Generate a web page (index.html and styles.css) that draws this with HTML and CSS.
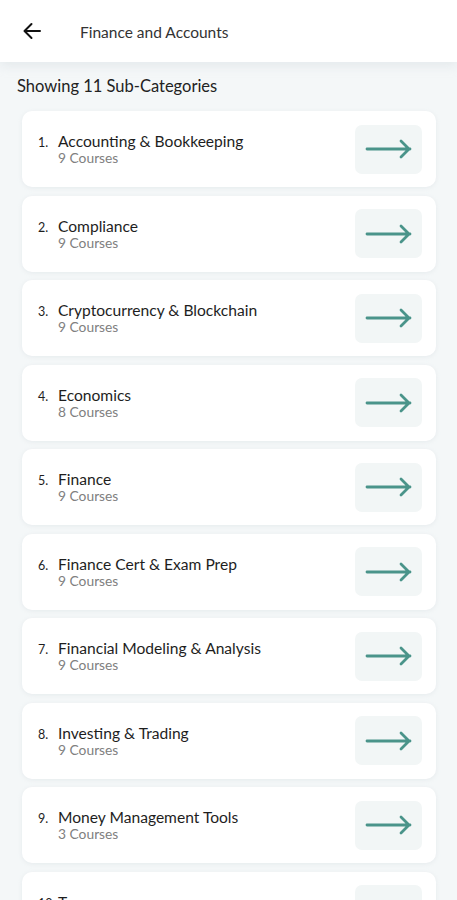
FILE: index.html
```html
<!DOCTYPE html>
<html lang="en">
<head>
    <meta charset="UTF-8">
    <meta name="viewport" content="width=device-width, initial-scale=1.0">
    <title>Finance and Accounts</title>
    <link rel="stylesheet" href="styles.css">
</head>
<body>
    <div class="header">
        <svg class="back" width="20" height="18" viewBox="0 0 20 18">
            <path d="M18 9H3M9.5 2L2.5 9l7 7" fill="none" stroke="#111" stroke-width="2" stroke-linecap="round" stroke-linejoin="round"/>
        </svg>
        <span class="headerTitle">Finance and Accounts</span>
    </div>

    <div class="content">
        <p class="count">Showing 11 Sub-Categories</p>

        <div class="list">
            <div class="item">
                <span class="num">1.</span>
                <div class="text"><p class="name">Accounting &amp; Bookkeeping</p><p class="sub">9 Courses</p></div>
                <div class="go"><svg width="48" height="22" viewBox="0 0 48 22"><path d="M2 11h43M36 3l8 8-8 8" fill="none" stroke="#4a948a" stroke-width="2.8" stroke-linecap="round" stroke-linejoin="round"/></svg></div>
            </div>
            <div class="item">
                <span class="num">2.</span>
                <div class="text"><p class="name">Compliance</p><p class="sub">9 Courses</p></div>
                <div class="go"><svg width="48" height="22" viewBox="0 0 48 22"><path d="M2 11h43M36 3l8 8-8 8" fill="none" stroke="#4a948a" stroke-width="2.8" stroke-linecap="round" stroke-linejoin="round"/></svg></div>
            </div>
            <div class="item">
                <span class="num">3.</span>
                <div class="text"><p class="name">Cryptocurrency &amp; Blockchain</p><p class="sub">9 Courses</p></div>
                <div class="go"><svg width="48" height="22" viewBox="0 0 48 22"><path d="M2 11h43M36 3l8 8-8 8" fill="none" stroke="#4a948a" stroke-width="2.8" stroke-linecap="round" stroke-linejoin="round"/></svg></div>
            </div>
            <div class="item">
                <span class="num">4.</span>
                <div class="text"><p class="name">Economics</p><p class="sub">8 Courses</p></div>
                <div class="go"><svg width="48" height="22" viewBox="0 0 48 22"><path d="M2 11h43M36 3l8 8-8 8" fill="none" stroke="#4a948a" stroke-width="2.8" stroke-linecap="round" stroke-linejoin="round"/></svg></div>
            </div>
            <div class="item">
                <span class="num">5.</span>
                <div class="text"><p class="name">Finance</p><p class="sub">9 Courses</p></div>
                <div class="go"><svg width="48" height="22" viewBox="0 0 48 22"><path d="M2 11h43M36 3l8 8-8 8" fill="none" stroke="#4a948a" stroke-width="2.8" stroke-linecap="round" stroke-linejoin="round"/></svg></div>
            </div>
            <div class="item">
                <span class="num">6.</span>
                <div class="text"><p class="name">Finance Cert &amp; Exam Prep</p><p class="sub">9 Courses</p></div>
                <div class="go"><svg width="48" height="22" viewBox="0 0 48 22"><path d="M2 11h43M36 3l8 8-8 8" fill="none" stroke="#4a948a" stroke-width="2.8" stroke-linecap="round" stroke-linejoin="round"/></svg></div>
            </div>
            <div class="item">
                <span class="num">7.</span>
                <div class="text"><p class="name">Financial Modeling &amp; Analysis</p><p class="sub">9 Courses</p></div>
                <div class="go"><svg width="48" height="22" viewBox="0 0 48 22"><path d="M2 11h43M36 3l8 8-8 8" fill="none" stroke="#4a948a" stroke-width="2.8" stroke-linecap="round" stroke-linejoin="round"/></svg></div>
            </div>
            <div class="item">
                <span class="num">8.</span>
                <div class="text"><p class="name">Investing &amp; Trading</p><p class="sub">9 Courses</p></div>
                <div class="go"><svg width="48" height="22" viewBox="0 0 48 22"><path d="M2 11h43M36 3l8 8-8 8" fill="none" stroke="#4a948a" stroke-width="2.8" stroke-linecap="round" stroke-linejoin="round"/></svg></div>
            </div>
            <div class="item">
                <span class="num">9.</span>
                <div class="text"><p class="name">Money Management Tools</p><p class="sub">3 Courses</p></div>
                <div class="go"><svg width="48" height="22" viewBox="0 0 48 22"><path d="M2 11h43M36 3l8 8-8 8" fill="none" stroke="#4a948a" stroke-width="2.8" stroke-linecap="round" stroke-linejoin="round"/></svg></div>
            </div>
            <div class="item">
                <span class="num">10.</span>
                <div class="text"><p class="name">Taxes</p><p class="sub">9 Courses</p></div>
                <div class="go"><svg width="48" height="22" viewBox="0 0 48 22"><path d="M2 11h43M36 3l8 8-8 8" fill="none" stroke="#4a948a" stroke-width="2.8" stroke-linecap="round" stroke-linejoin="round"/></svg></div>
            </div>
        </div>
    </div>
</body>
</html>
```

FILE: styles.css
```css
body {
    margin: 0;
    background-color: #f4f7f8;
    font-family: "Lato", "Open Sans", sans-serif;
    color: #1e1e1e;
}

p {
    margin: 0;
}

.header {
    height: 62px;
    background-color: #fff;
    display: flex;
    align-items: center;
    padding-left: 22px;
    box-shadow: 0 4px 10px rgba(200, 210, 214, 0.35);
}

.header .back {
    margin-top: -1px;
}

.headerTitle {
    margin-left: 38px;
    font-size: 15.5px;
    color: #333;
    margin-top: 1px;
}

.content {
    padding: 14px 21px 0 17px;
}

.count {
    font-size: 16.5px;
    color: #222;
    margin-bottom: 15px;
}

.list {
    display: flex;
    flex-direction: column;
    gap: 8.5px;
    padding-left: 5px;
}

.item {
    height: 76px;
    background-color: #fff;
    border-radius: 10px;
    display: flex;
    align-items: center;
    padding: 0 14px 0 16px;
    box-sizing: border-box;
    box-shadow: 0 1px 4px rgba(210, 218, 222, 0.4);
}

.num {
    width: 20px;
    font-size: 12.5px;
    align-self: flex-start;
    margin-top: 24px;
}

.text {
    flex: 1;
}

.name {
    font-size: 15.6px;
    color: #1e1e1e;
    line-height: 18px;
}

.sub {
    font-size: 13.8px;
    color: #808080;
    line-height: 16px;
}

.go {
    width: 67px;
    height: 49px;
    background-color: #f2f6f6;
    border-radius: 7px;
    display: flex;
    align-items: center;
    justify-content: center;
}
```
